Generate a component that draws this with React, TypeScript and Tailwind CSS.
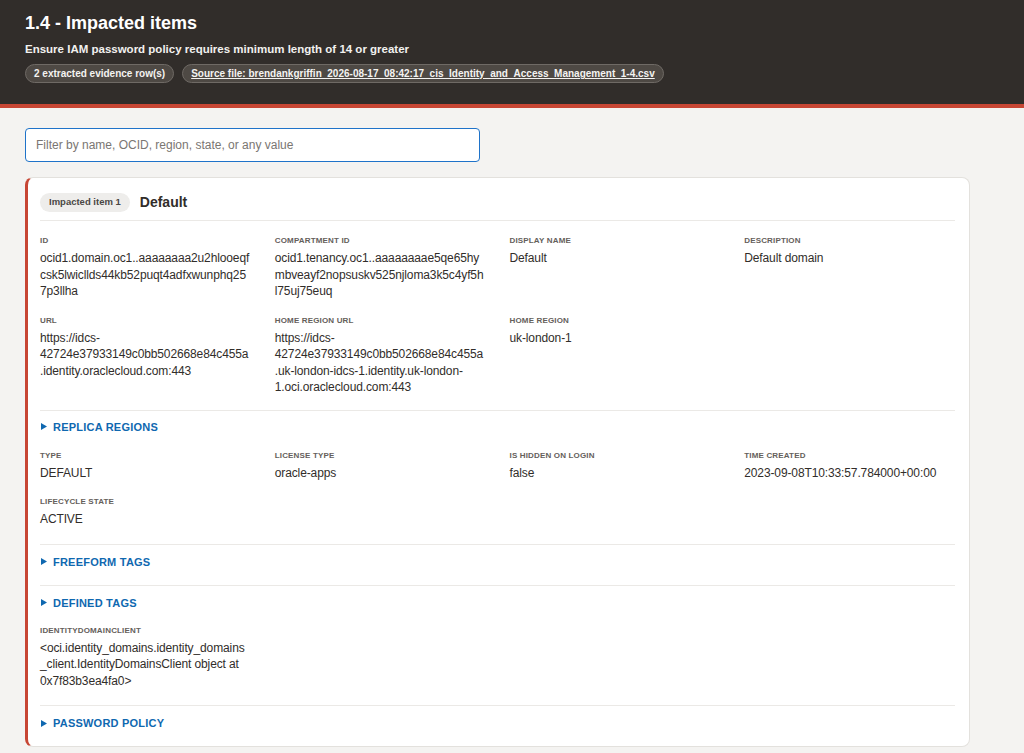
import React from "react";

type Field = { label: string; value: string };

const font = { fontFamily: '"Liberation Sans", Arial, sans-serif' };

const identityFields: Field[] = [
  { label: "ID", value: "ocid1.domain.oc1..aaaaaaaa2u2hlooeqfcsk5lwicllds44kb52puqt4adfxwunphq257p3llha" },
  { label: "Compartment ID", value: "ocid1.tenancy.oc1..aaaaaaaae5qe65hymbveayf2nopsuskv525njloma3k5c4yf5hl75uj75euq" },
  { label: "Display name", value: "Default" },
  { label: "Description", value: "Default domain" },
  { label: "URL", value: "https://idcs-42724e37933149c0bb502668e84c455a.identity.oraclecloud.com:443" },
  { label: "Home region URL", value: "https://idcs-42724e37933149c0bb502668e84c455a.uk-london-idcs-1.identity.uk-london-1.oci.oraclecloud.com:443" },
  { label: "Home region", value: "uk-london-1" },
];

const stateFields: Field[] = [
  { label: "Type", value: "DEFAULT" },
  { label: "License type", value: "oracle-apps" },
  { label: "Is hidden on login", value: "false" },
  { label: "Time created", value: "2023-09-08T10:33:57.784000+00:00" },
  { label: "Lifecycle state", value: "ACTIVE" },
];

const clientFields: Field[] = [
  {
    label: "IdentityDomainClient",
    value: "<oci.identity_domains.identity_domains_client.IdentityDomainsClient object at 0x7f83b3ea4fa0>",
  },
];

function FieldGrid({ fields, className = "" }: { fields: Field[]; className?: string }) {
  return (
    <div className={`grid grid-cols-4 gap-x-6 gap-y-[15px] ${className}`}>
      {fields.map((f) => (
        <div key={f.label} className="min-w-0">
          <div className="text-[8px] leading-[12px] font-bold uppercase tracking-[0.02em] text-[#65605b]">
            {f.label}
          </div>
          <div className="mt-[3px] text-[12px] leading-[16.5px] tracking-[-0.01em] text-[#312d2a] [overflow-wrap:anywhere]">
            {f.value}
          </div>
        </div>
      ))}
    </div>
  );
}

function Collapsed({ title, className = "pt-[10px]" }: { title: string; className?: string }) {
  return (
    <div className={`border-t border-[#ebe9e6] pb-[16px] ${className}`}>
      <div className="flex items-center gap-[6px] text-[11px] leading-[14px] font-bold uppercase tracking-[0.02em] text-[#0f68b0]">
        <svg width="6" height="7" viewBox="0 0 6 7" className="ml-px">
          <path d="M0 0 L6 3.5 L0 7 Z" fill="currentColor" />
        </svg>
        {title}
      </div>
    </div>
  );
}

export default function App() {
  return (
    <div className="min-h-screen bg-[#f4f3f1]" style={font}>
      {/* Header */}
      <header className="bg-[#312d2a] border-b-4 border-[#c74634] px-[25px] pt-[12px] pb-[21px]">
        <h1 className="text-[18px] leading-[22px] font-bold text-white">1.4 - Impacted items</h1>
        <p className="mt-[7px] text-[11.5px] leading-[16px] font-bold text-[#f2f1ef]">
          Ensure IAM password policy requires minimum length of 14 or greater
        </p>
        <div className="mt-[7px] flex items-center gap-2">
          <span className="h-[19px] flex items-center px-[8px] rounded-full bg-[#4e4944] border border-[#6f6a65] text-[10px] font-bold text-[#f4f3f1]">
            2 extracted evidence row(s)
          </span>
          <span className="h-[19px] flex items-center px-[8px] rounded-full bg-[#4e4944] border border-[#6f6a65] text-[10px] font-bold text-[#f4f3f1] underline">
            Source file: brendankgriffin_2026-08-17_08:42:17_cis_Identity_and_Access_Management_1-4.csv
          </span>
        </div>
      </header>

      <main className="px-[25px] pt-[20px] pb-6 w-[995px]">
        <input
          type="text"
          placeholder="Filter by name, OCID, region, state, or any value"
          className="w-[455px] h-[34px] px-[10px] rounded-[4px] bg-white border-[1.5px] border-[#1f73c9] text-[12px] text-[#312d2a] placeholder:text-[#7a7672] outline-none"
        />

        {/* Card */}
        <section className="mt-[15px] bg-white rounded-lg border border-[#e3e1dd] border-l-[3px] border-l-[#c74634] pl-[12px] pr-[14px] pt-[14px]">
          <div className="flex items-center gap-[10px] pb-[7px] border-b border-[#ebe9e6]">
            <span className="h-[19px] flex items-center px-[9px] rounded-full bg-[#eeedeb] text-[9.5px] font-bold text-[#4a4744]">
              Impacted item 1
            </span>
            <span className="text-[14px] font-bold text-[#312d2a]">Default</span>
          </div>

          <FieldGrid fields={identityFields} className="pt-[14px] pb-[14px]" />
          <Collapsed title="Replica regions" className="pt-[9px]" />
          <FieldGrid fields={stateFields} className="pb-[16px]" />
          <Collapsed title="Freeform tags" />
          <Collapsed title="Defined tags" />
          <FieldGrid fields={clientFields} className="-mt-[1px] pb-[16px]" />
          <Collapsed title="Password policy" />
        </section>
      </main>
    </div>
  );
}
